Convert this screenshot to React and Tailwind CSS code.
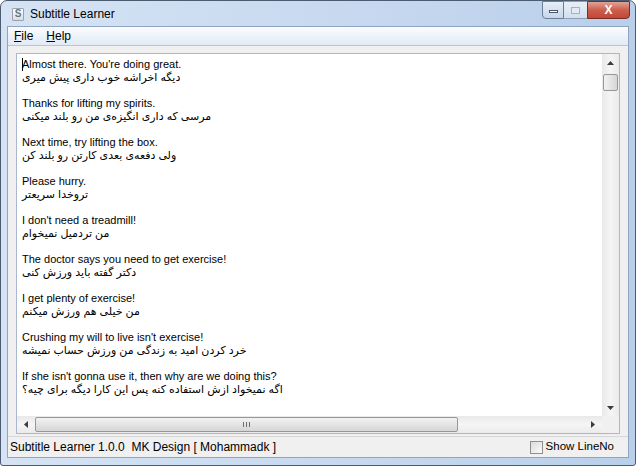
import React from "react";

const lines = [
  ["Almost there. You're doing great.", "دیگه اخراشه خوب داری پیش میری"],
  ["Thanks for lifting my spirits.", "مرسی که داری انگیزه‌ی من رو بلند میکنی"],
  ["Next time, try lifting the box.", "ولی دفعه‌ی بعدی کارتن رو بلند کن"],
  ["Please hurry.", "تروخدا سریعتر"],
  ["I don't need a treadmill!", "من تردمیل نمیخوام"],
  ["The doctor says you need to get exercise!", "دکتر گفته باید ورزش کنی"],
  ["I get plenty of exercise!", "من خیلی هم ورزش میکنم"],
  ["Crushing my will to live isn't exercise!", "خرد کردن امید به زندگی من ورزش حساب نمیشه"],
  ["If she isn't gonna use it, then why are we doing this?", "اگه نمیخواد ازش استفاده کنه پس این کارا دیگه برای چیه؟"],
];

function Arrow({ dir }) {
  const pts = {
    up: "0,4 7,4 3.5,0",
    down: "0,0 7,0 3.5,4",
    left: "4,0 4,7 0,3.5",
    right: "0,0 0,7 4,3.5",
  }[dir];
  const w = dir === "up" || dir === "down" ? 7 : 4;
  const h = dir === "up" || dir === "down" ? 4 : 7;
  return (
    <svg width={w} height={h} viewBox={`0 0 ${w} ${h}`}>
      <polygon points={pts} fill="#3c3c3c" />
    </svg>
  );
}

export default function App() {
  return (
    <div
      className="w-[636px] h-[466px] flex flex-col rounded-t-[7px] rounded-b-[3px] border border-[#4b5b70] bg-gradient-to-r from-[#d5e3f4] via-[#c8daf0] to-[#b9cfea] overflow-hidden"
      style={{ fontFamily: '"Liberation Sans", "DejaVu Sans", Arial, sans-serif' }}
    >
      {/* title bar */}
      <div className="h-[25px] flex items-start shrink-0">
        <div className="flex items-center h-[26px] pl-[11px] gap-[6px] flex-1">
          <div className="w-[12px] h-[13px] border border-[#9aa3ad] bg-gradient-to-b from-[#ffffff] to-[#d8dde3] rounded-[1px] flex items-center justify-center text-[10px] leading-none text-[#6a7580] font-bold">
            S
          </div>
          <span className="text-[12px] text-black">Subtitle Learner</span>
        </div>
        <div className="flex mr-[5px] h-[18px]">
          <div className="w-[22px] h-[18px] border border-[#6d7f98] rounded-bl-[4px] bg-gradient-to-b from-[#e6eef8] to-[#c6d6eb] flex items-center justify-center">
            <div className="w-[9px] h-[3px] border border-[#4b5668] bg-white mt-[3px]" />
          </div>
          <div className="w-[23px] h-[18px] border-y border-[#8d9db3] bg-gradient-to-b from-[#e9eff8] to-[#d3dfee] flex items-center justify-center">
            <div className="w-[9px] h-[7px] border border-[#a5b2c3] bg-[#e3eaf3]" />
          </div>
          <div className="w-[43px] h-[18px] border border-[#7a2d25] rounded-br-[4px] bg-gradient-to-b from-[#e0a497] via-[#cc5e4e] to-[#c44536] flex items-center justify-center">
            <span className="text-white text-[12px] font-bold leading-none">X</span>
          </div>
        </div>
      </div>

      {/* client */}
      <div className="flex-1 mx-[6px] border border-[#8ea4c0] flex flex-col bg-[#f0f0f0] min-h-0">
        {/* menu */}
        <div className="h-[19px] shrink-0 flex items-center gap-[13px] pl-[6px] text-[12px] text-black bg-gradient-to-b from-[#fbfcfe] to-[#e1eaf6] border-b border-[#b7c6da]">
          <span>
            <span className="underline">F</span>ile
          </span>
          <span>
            <span className="underline">H</span>elp
          </span>
        </div>

        {/* text box */}
        <div className="mx-[8px] mt-[7px] h-[381px] border border-[#a9b8cc] bg-white flex flex-col shrink-0">
          <div className="flex flex-1 min-h-0">
            <div className="flex-1 overflow-hidden pt-[4px] pl-[5px] text-[11px] leading-[13px] text-black relative">
              <div className="absolute left-[5px] top-[4px] w-px h-[13px] bg-black" />
              {lines.map(([en, fa], i) => (
                <div key={i} className="mb-[13px]">
                  <div className="h-[13px] whitespace-nowrap">{en}</div>
                  <div className="h-[13px] whitespace-nowrap text-left">{fa}</div>
                </div>
              ))}
            </div>
            {/* vertical scrollbar */}
            <div className="w-[17px] bg-gradient-to-r from-[#e9e9e9] via-[#f5f5f5] to-[#ebebeb] flex flex-col items-center">
              <div className="h-[17px] w-full flex items-center justify-center">
                <Arrow dir="up" />
              </div>
              <div className="w-[15px] h-[17px] mt-[3px] border border-[#979797] rounded-[2px] bg-gradient-to-r from-[#f2f2f2] to-[#d6d6d6]" />
              <div className="flex-1" />
              <div className="h-[17px] w-full flex items-center justify-center">
                <Arrow dir="down" />
              </div>
            </div>
          </div>
          {/* horizontal scrollbar */}
          <div className="h-[17px] flex shrink-0">
            <div className="flex-1 flex items-center bg-gradient-to-b from-[#e9e9e9] via-[#f5f5f5] to-[#ebebeb]">
              <div className="w-[18px] h-full flex items-center justify-center">
                <Arrow dir="left" />
              </div>
              <div className="w-[423px] h-[15px] border border-[#979797] rounded-[2px] bg-gradient-to-b from-[#f2f2f2] to-[#d6d6d6] flex items-center justify-center gap-[1px]">
                <div className="w-px h-[5px] bg-[#6e6e6e]" />
                <div className="w-px h-[5px] bg-[#6e6e6e] ml-[1px]" />
                <div className="w-px h-[5px] bg-[#6e6e6e] ml-[1px]" />
              </div>
              <div className="flex-1" />
              <div className="w-[18px] h-full flex items-center justify-center">
                <Arrow dir="right" />
              </div>
            </div>
            <div className="w-[17px] bg-[#f0f0f0]" />
          </div>
        </div>

        <div className="flex-1" />

        {/* status bar */}
        <div className="h-[21px] shrink-0 border-t border-[#d7d7d7] flex items-center pl-[2px] pr-[14px] text-[12px] text-black">
          <span className="flex-1 whitespace-pre">Subtitle Learner 1.0.0  MK Design [ Mohammadk ]</span>
          <div className="w-[13px] h-[13px] border border-[#8f8f8f] bg-gradient-to-br from-[#dcdcdc] to-[#fafafa] mr-[3px]" />
          <span className="text-[11.5px]">Show LineNo</span>
        </div>
      </div>
      <div className="h-[7px] shrink-0" />
    </div>
  );
}
